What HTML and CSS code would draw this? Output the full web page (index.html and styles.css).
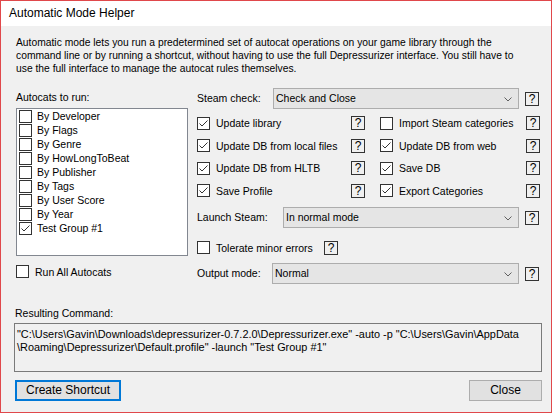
FILE: index.html
```html
<!DOCTYPE html>
<html>
<head>
<meta charset="utf-8">
<link rel="stylesheet" href="styles.css">
</head>
<body>
<div class="window">
  <div class="titlebar">Automatic Mode Helper</div>
  <div class="content">
    <p class="desc">Automatic mode lets you run a predetermined set of autocat operations on your game library through the<br>command line or by running a shortcut, without having to use the full Depressurizer interface. You still have to<br>use the full interface to manage the autocat rules themselves.</p>
    <div class="main">
      <div class="left">
        <div class="lbl autocats-lbl">Autocats to run:</div>
        <div class="listbox">
          <div class="item"><span class="cb"></span>By Developer</div>
          <div class="item"><span class="cb"></span>By Flags</div>
          <div class="item"><span class="cb"></span>By Genre</div>
          <div class="item"><span class="cb"></span>By HowLongToBeat</div>
          <div class="item"><span class="cb"></span>By Publisher</div>
          <div class="item"><span class="cb"></span>By Tags</div>
          <div class="item"><span class="cb"></span>By User Score</div>
          <div class="item"><span class="cb"></span>By Year</div>
          <div class="item"><span class="cb"><svg viewBox="0 0 11 11"><polyline points="1.5,5.5 4,8 9.5,2.5"/></svg></span>Test Group #1</div>
        </div>
        <div class="check runall"><span class="cb"></span>Run All Autocats</div>
      </div>
      <div class="right">
        <div class="row steam-row">
          <span class="lbl rlbl-steam">Steam check:</span>
          <div class="combo combo-steam">Check and Close<svg class="chev" viewBox="0 0 8 5"><polyline points="0.5,0.5 4,4 7.5,0.5"/></svg></div>
          <span class="help">?</span>
        </div>
        <div class="grid">
          <div class="check"><span class="cb"><svg viewBox="0 0 11 11"><polyline points="1.5,5.5 4,8 9.5,2.5"/></svg></span><span class="ctext">Update library</span><span class="help">?</span></div>
          <div class="check"><span class="cb"></span><span class="ctext">Import Steam categories</span><span class="help">?</span></div>
          <div class="check"><span class="cb"><svg viewBox="0 0 11 11"><polyline points="1.5,5.5 4,8 9.5,2.5"/></svg></span><span class="ctext">Update DB from local files</span><span class="help">?</span></div>
          <div class="check"><span class="cb"><svg viewBox="0 0 11 11"><polyline points="1.5,5.5 4,8 9.5,2.5"/></svg></span><span class="ctext">Update DB from web</span><span class="help">?</span></div>
          <div class="check"><span class="cb"><svg viewBox="0 0 11 11"><polyline points="1.5,5.5 4,8 9.5,2.5"/></svg></span><span class="ctext">Update DB from HLTB</span><span class="help">?</span></div>
          <div class="check"><span class="cb"><svg viewBox="0 0 11 11"><polyline points="1.5,5.5 4,8 9.5,2.5"/></svg></span><span class="ctext">Save DB</span><span class="help">?</span></div>
          <div class="check"><span class="cb"><svg viewBox="0 0 11 11"><polyline points="1.5,5.5 4,8 9.5,2.5"/></svg></span><span class="ctext">Save Profile</span><span class="help">?</span></div>
          <div class="check"><span class="cb"><svg viewBox="0 0 11 11"><polyline points="1.5,5.5 4,8 9.5,2.5"/></svg></span><span class="ctext">Export Categories</span><span class="help">?</span></div>
        </div>
        <div class="row launch-row">
          <span class="lbl rlbl-launch">Launch Steam:</span>
          <div class="combo combo-launch">In normal mode<svg class="chev" viewBox="0 0 8 5"><polyline points="0.5,0.5 4,4 7.5,0.5"/></svg></div>
          <span class="help">?</span>
        </div>
        <div class="row tolerate-row">
          <span class="cb"></span><span class="ttext">Tolerate minor errors</span><span class="help">?</span>
        </div>
        <div class="row output-row">
          <span class="lbl rlbl-output">Output mode:</span>
          <div class="combo combo-output">Normal<svg class="chev" viewBox="0 0 8 5"><polyline points="0.5,0.5 4,4 7.5,0.5"/></svg></div>
          <span class="help">?</span>
        </div>
      </div>
    </div>
    <div class="lbl result-lbl">Resulting Command:</div>
    <div class="result">"C:\Users\Gavin\Downloads\depressurizer-0.7.2.0\Depressurizer.exe" -auto -p "C:\Users\Gavin\AppData<br>\Roaming\Depressurizer\Default.profile" -launch "Test Group #1"</div>
    <div class="buttons">
      <div class="btn btn-default">Create Shortcut</div>
      <div class="btn btn-close">Close</div>
    </div>
  </div>
</div>
</body>
</html>
```

FILE: styles.css
```css
html, body {
  margin: 0;
  padding: 0;
  background: #ffffff;
}
body {
  font-family: "Liberation Sans", Arial, sans-serif;
  font-size: 10.5px;
  color: #000;
}
.window {
  box-sizing: border-box;
  width: 552px;
  height: 413px;
  border: 1px solid #e0484b;
  background: #f0f0f0;
  display: flex;
  flex-direction: column;
}
.titlebar {
  height: 25px;
  background: #ffffff;
  font-size: 12px;
  line-height: 25px;
  padding-left: 8px;
  flex: none;
}
.content {
  padding: 0 10px 0 12px;
  display: flex;
  flex-direction: column;
}
.desc {
  margin: 10px 0 0 3px;
  line-height: 13px;
  white-space: nowrap;
  font-size: 10.3px;
}
.main {
  display: flex;
  margin-top: 13px;
  height: 196px;
}
.left {
  width: 174px;
  margin-left: 3px;
  display: flex;
  flex-direction: column;
}
.lbl {
  line-height: 13px;
  white-space: nowrap;
}
.autocats-lbl {
  margin-top: 3px;
}
.listbox {
  box-sizing: border-box;
  margin-top: 4px;
  height: 148px;
  background: #fff;
  border: 1px solid #828790;
  padding: 0 0 0 2px;
}
.item {
  height: 14px;
  line-height: 14px;
  display: flex;
  align-items: center;
}
.item .cb {
  margin-right: 5px;
}
.cb {
  box-sizing: border-box;
  width: 13px;
  height: 13px;
  border: 1px solid #333;
  background: #fff;
  flex: none;
  display: inline-block;
}
.cb svg {
  display: block;
  width: 11px;
  height: 11px;
}
.cb polyline {
  fill: none;
  stroke: #333;
  stroke-width: 1;
}
.check {
  display: flex;
  align-items: center;
}
.runall {
  margin-top: 9px;
  height: 13px;
}
.runall .cb {
  margin-right: 6px;
}
.right {
  margin-left: 9px;
  width: 344px;
  display: flex;
  flex-direction: column;
}
.row {
  display: flex;
  align-items: center;
  height: 21px;
}
.rlbl-steam {
  width: 76px;
}
.rlbl-launch {
  width: 86px;
}
.rlbl-output {
  width: 75px;
}
.combo {
  box-sizing: border-box;
  height: 21px;
  line-height: 19px;
  background: #e5e5e5;
  border: 1px solid #adadad;
  padding-left: 2px;
  position: relative;
}
.chev {
  position: absolute;
  right: 6px;
  top: 8px;
  width: 8px;
  height: 5px;
}
.chev polyline {
  fill: none;
  stroke: #606060;
  stroke-width: 1;
}
.combo-steam {
  width: 246px;
}
.combo-launch {
  width: 236px;
}
.combo-output {
  width: 247px;
}
.help {
  box-sizing: border-box;
  width: 14px;
  height: 14px;
  border: 1px solid #333;
  line-height: 12px;
  text-align: center;
  font-size: 12px;
  flex: none;
}
.row .help {
  margin-left: 6px;
}
.grid {
  display: grid;
  grid-template-columns: 183px 161px;
  grid-auto-rows: 22.5px;
  margin-top: 3px;
}
.grid .check .ctext {
  margin-left: 6px;
  flex: 1;
  white-space: nowrap;
}
.grid .help {
  margin-right: 15px;
}
.grid .check:nth-child(2n) .help {
  margin-right: 1px;
}
.launch-row {
  margin-top: 5px;
}
.tolerate-row {
  margin-top: 12px;
  height: 15px;
}
.tolerate-row .cb {
  margin-top: -1px;
}
.ttext {
  margin-left: 6px;
  width: 108px;
}
.tolerate-row .help {
  margin-left: 0;
}
.output-row {
  margin-top: 8px;
}
.result-lbl {
  margin: 23px 0 0 2px;
}
.result {
  box-sizing: border-box;
  margin-top: 3px;
  margin-left: 1px;
  width: 528px;
  height: 49px;
  border: 1px solid #7a7a7a;
  background: #f0f0f0;
  padding: 4px 0 0 2px;
  line-height: 13px;
  white-space: nowrap;
  font-size: 10.9px;
}
.buttons {
  display: flex;
  justify-content: space-between;
  margin-top: 8px;
  margin-left: 2px;
  width: 527px;
}
.btn {
  box-sizing: border-box;
  height: 21px;
  background: #e1e1e1;
  border: 1px solid #adadad;
  text-align: center;
  line-height: 19px;
  font-size: 12px;
}
.btn-default {
  width: 106px;
  border: 2px solid #0078d7;
  line-height: 17px;
}
.btn-close {
  width: 73px;
}
```
